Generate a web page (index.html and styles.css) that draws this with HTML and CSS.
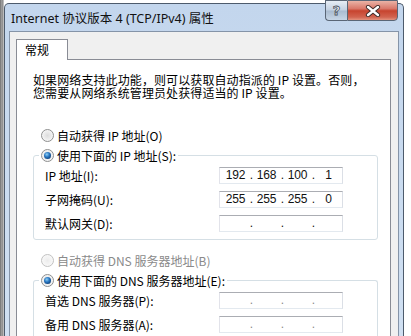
FILE: index.html
```html
<!DOCTYPE html>
<html>
<head>
    <title>Internet 协议版本 4 (TCP/IPv4) 属性</title>
    <link rel="stylesheet" href="styles.css">
</head>
<body>
    <div class="desk">
        <div class="dialog">
            <div class="titlebar">
                <span class="title">Internet 协议版本 4 (TCP/IPv4) 属性</span>
                <div class="caption-btns">
                    <div class="cap-btn help">?</div>
                    <div class="cap-btn close">
                        <svg width="16" height="12" viewBox="0 0 16 12">
                            <path d="M3 2 L13 10 M13 2 L3 10" stroke="#3b2a28" stroke-width="4.2" stroke-linecap="round"/>
                            <path d="M3 2 L13 10 M13 2 L3 10" stroke="#fff" stroke-width="2.4" stroke-linecap="round"/>
                        </svg>
                    </div>
                </div>
            </div>
            <div class="client">
                <div class="tabs">
                    <div class="tab active">常规</div>
                </div>
                <div class="panel">
                    <p class="intro">如果网络支持此功能，则可以获取自动指派的 IP 设置。否则，<br>您需要从网络系统管理员处获得适当的 IP 设置。</p>

                    <div class="radio-row"><span class="radio"></span>自动获得 IP 地址(O)</div>

                    <fieldset class="group">
                        <legend><span class="radio checked"></span>使用下面的 IP 地址(S):</legend>
                        <div class="field-row">
                            <span class="field-label">IP 地址(I):</span>
                            <div class="ip-box">
                                <span class="oct">192</span><span class="dot">.</span><span class="oct">168</span><span class="dot">.</span><span class="oct">100</span><span class="dot">.</span><span class="oct">1</span>
                            </div>
                        </div>
                        <div class="field-row">
                            <span class="field-label">子网掩码(U):</span>
                            <div class="ip-box">
                                <span class="oct">255</span><span class="dot">.</span><span class="oct">255</span><span class="dot">.</span><span class="oct">255</span><span class="dot">.</span><span class="oct">0</span>
                            </div>
                        </div>
                        <div class="field-row">
                            <span class="field-label">默认网关(D):</span>
                            <div class="ip-box">
                                <span class="oct"></span><span class="dot">.</span><span class="oct"></span><span class="dot">.</span><span class="oct"></span><span class="dot">.</span><span class="oct"></span>
                            </div>
                        </div>
                    </fieldset>

                    <div class="radio-row disabled spaced"><span class="radio"></span>自动获得 DNS 服务器地址(B)</div>

                    <fieldset class="group dns">
                        <legend><span class="radio checked"></span>使用下面的 DNS 服务器地址(E):</legend>
                        <div class="field-row">
                            <span class="field-label">首选 DNS 服务器(P):</span>
                            <div class="ip-box faint">
                                <span class="oct"></span><span class="dot">.</span><span class="oct"></span><span class="dot">.</span><span class="oct"></span><span class="dot">.</span><span class="oct"></span>
                            </div>
                        </div>
                        <div class="field-row">
                            <span class="field-label">备用 DNS 服务器(A):</span>
                            <div class="ip-box faint">
                                <span class="oct"></span><span class="dot">.</span><span class="oct"></span><span class="dot">.</span><span class="oct"></span><span class="dot">.</span><span class="oct"></span>
                            </div>
                        </div>
                    </fieldset>
                </div>
            </div>
        </div>
    </div>
</body>
</html>
```

FILE: styles.css
```css
html, body {
    margin: 0;
    padding: 0;
    overflow: hidden;
}
body {
    width: 411px;
    height: 336px;
    font-family: "Noto Sans CJK SC", sans-serif;
    font-size: 12px;
    color: #000;
}
.desk {
    height: 336px;
    padding-top: 3px;
    padding-left: 4px;
    box-sizing: border-box;
    overflow: hidden;
    background: linear-gradient(to right, #6f6f6f 0, #a9a9a9 2px, #7a7a7a 3px, #fff 4px);
}
.dialog {
    width: 400px;
    height: 333px;
    box-sizing: border-box;
    border: 1px solid #4d5b6c;
    border-bottom: none;
    border-radius: 5px 5px 0 0;
    padding: 0 4px;
    background: linear-gradient(#c3d6ed, #d0e0f2);
}
.titlebar {
    height: 27px;
    display: flex;
    justify-content: space-between;
    align-items: flex-start;
}
.title {
    margin-top: 7px;
    margin-left: 2px;
    font-family: "Noto Sans", "Noto Sans CJK SC", sans-serif;
    font-size: 12.5px;
    line-height: 16px;
    color: #111;
}
.caption-btns {
    display: flex;
    margin-top: -4px;
    margin-right: 1px;
}
.cap-btn {
    height: 21px;
    box-sizing: border-box;
    border: 1px solid #5a6676;
    display: flex;
    align-items: center;
    justify-content: center;
}
.help {
    width: 22px;
    border-right: none;
    border-radius: 0 0 0 4px;
    background: linear-gradient(#e6edf5, #c3d1e2 48%, #a9bbd0 52%, #c7d6e6);
    font-family: "DejaVu Sans", sans-serif;
    font-weight: bold;
    font-size: 13px;
    color: #eef2f6;
    -webkit-text-stroke: 0.8px #4a5260;
}
.close {
    width: 51px;
    border-radius: 0 0 4px 0;
    background: linear-gradient(#eab3a6, #d9786a 40%, #c7442f 52%, #d26450 85%, #e3937f);
}
.client {
    border: 1px solid #8594a8;
    border-bottom: none;
    background: #f0f0f0;
    padding: 7px 7px 0 6px;
    height: 305px;
    box-sizing: border-box;
    overflow: hidden;
}
.tabs {
    display: flex;
    height: 20px;
}
.tab {
    position: relative;
    z-index: 1;
    width: 42px;
    height: 20px;
    padding-left: 8px;
    border: 1px solid #898c95;
    border-bottom: none;
    background: #fff;
    line-height: 20px;
    font-size: 12px;
}
.panel {
    border: 1px solid #898c95;
    border-bottom: none;
    background: #fff;
    padding: 13px 12px 0 16px;
    height: 277px;
    box-sizing: border-box;
    overflow: hidden;
}
.intro {
    margin: 0;
    line-height: 13px;
    letter-spacing: 0.1px;
}
.radio-row {
    display: flex;
    align-items: center;
    height: 20px;
    margin-top: 26px;
    padding-left: 8px;
}
.radio-row.spaced {
    margin-top: 10px;
}
.radio-row.disabled {
    color: #8a8a8a;
}
.radio {
    display: inline-block;
    width: 13px;
    height: 13px;
    box-sizing: border-box;
    border: 1px solid #8e8f8f;
    border-radius: 50%;
    margin-right: 3px;
    background: radial-gradient(circle at 50% 50%, #dcdcdc 0, #f4f4f4 70%);
    position: relative;
    flex: none;
}
.disabled .radio {
    border-color: #c2c2c2;
    background: radial-gradient(circle at 50% 50%, #ececec 0, #f8f8f8 70%);
}
.radio.checked::after {
    content: "";
    position: absolute;
    left: 2px;
    top: 2px;
    width: 7px;
    height: 7px;
    border-radius: 50%;
    background: radial-gradient(circle at 40% 35%, #8fd0f5 0, #2a78c2 40%, #0d3f7a 80%);
}
.group {
    margin: 2px 0 0 0;
    padding: 0 0 4px 5px;
    border: 1px solid #d5dfe5;
    border-radius: 3px;
    min-width: 0;
}
.group.dns {
    padding-bottom: 0;
    border-bottom: none;
    border-radius: 3px 3px 0 0;
}
.group legend {
    display: flex;
    align-items: center;
    height: 16px;
    padding: 0 2px;
}
.field-row {
    display: flex;
    align-items: center;
    height: 24px;
    padding-left: 6px;
}
.field-label {
    width: 174px;
    flex: none;
}
.ip-box {
    width: 124px;
    height: 17px;
    box-sizing: border-box;
    border: 1px solid;
    border-color: #abadb3 #dbdfe6 #e3e9ef #e2e3ea;
    display: flex;
    align-items: center;
    padding-left: 2px;
    font-family: "Liberation Sans", sans-serif;
    font-size: 12px;
    letter-spacing: -0.2px;
    color: #111;
}
.oct {
    width: 27px;
    text-align: center;
}
.dot {
    width: 4px;
    text-align: right;
}
.faint .dot {
    color: #8a8a8a;
}
```
